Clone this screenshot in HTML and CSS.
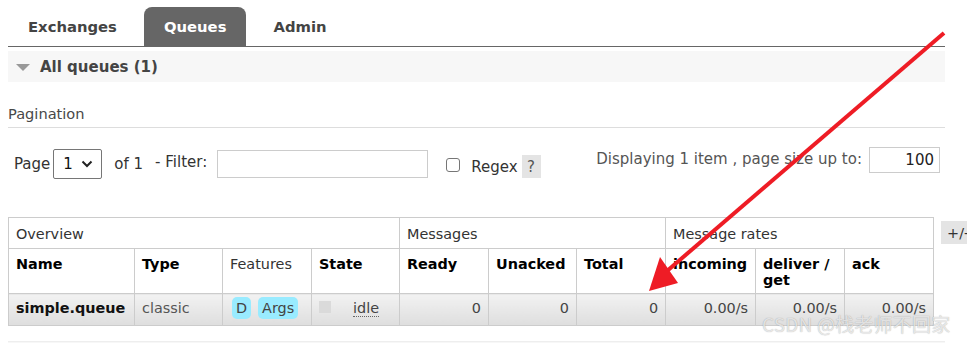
FILE: index.html
```html
<!DOCTYPE html>
<html>
<head>
<meta charset="utf-8">
<link rel="stylesheet" href="styles.css">
</head>
<body>
<div class="page">
  <div class="tabs">
    <div class="tab">Exchanges</div>
    <div class="tab active">Queues</div>
    <div class="tab">Admin</div>
  </div>
  <div class="section-head">
    <span class="tri"></span>
    <span class="section-title">All queues (1)</span>
  </div>
  <div class="pag-title">Pagination</div>
  <div class="controls">
    <div class="left-ctrls">
      <span class="lbl">Page</span>
      <span class="select"><span>1</span>
        <svg width="12" height="8" viewBox="0 0 12 8"><path d="M1.5 1.5 L6 6 L10.5 1.5" fill="none" stroke="#222" stroke-width="2"/></svg>
      </span>
      <span class="lbl of">of 1</span>
      <span class="lbl filt">- Filter:</span>
      <span class="input filter"></span>
      <span class="checkbox"></span>
      <span class="lbl regex">Regex</span>
      <span class="help">?</span>
    </div>
    <div class="right-ctrls">
      <span class="lbl disp">Displaying 1 item , page size up to:</span>
      <span class="input size">100</span>
    </div>
  </div>
  <div class="table-wrap">
    <table class="list">
      <colgroup>
        <col style="width:126px"><col style="width:88px"><col style="width:89px"><col style="width:88px">
        <col style="width:89px"><col style="width:88px"><col style="width:89px">
        <col style="width:90px"><col style="width:89px"><col style="width:89px">
      </colgroup>
      <tr class="group">
        <th colspan="4">Overview</th>
        <th colspan="3">Messages</th>
        <th colspan="3">Message rates</th>
      </tr>
      <tr class="heads">
        <th class="b">Name</th>
        <th class="b">Type</th>
        <th>Features</th>
        <th class="b">State</th>
        <th class="b">Ready</th>
        <th class="b">Unacked</th>
        <th class="b">Total</th>
        <th class="b">incoming</th>
        <th class="b">deliver / get</th>
        <th class="b">ack</th>
      </tr>
      <tr class="data">
        <td class="name">simple.queue</td>
        <td class="type">classic</td>
        <td class="feat"><span class="badge">D</span><span class="badge">Args</span></td>
        <td class="state"><span class="sq"></span><span class="idle">idle</span></td>
        <td class="num">0</td>
        <td class="num">0</td>
        <td class="num">0</td>
        <td class="num">0.00/s</td>
        <td class="num">0.00/s</td>
        <td class="num">0.00/s</td>
      </tr>
    </table>
    <span class="plusminus">+/-</span>
  </div>
  <div class="next-section"></div>
</div>
<svg class="arrow" width="967" height="343" viewBox="0 0 967 343">
  <line x1="944" y1="33" x2="667" y2="271" stroke="#ee1c25" stroke-width="4"/>
  <polygon points="649,291 660,257 678,283" fill="#ee1c25"/>
</svg>
<div class="watermark">CSDN @栈老师不回家</div>
</body>
</html>
```
FILE: styles.css
```css
html, body {
  margin: 0;
  padding: 0;
  background: #fff;
}
body {
  font-family: "DejaVu Sans", Verdana, sans-serif;
  font-size: 14.4px;
  color: #444;
  width: 967px;
  height: 343px;
  overflow: hidden;
  position: relative;
}
.page {
  padding-left: 8px;
  width: 937px;
}
.tabs {
  display: flex;
  align-items: flex-end;
  height: 46px;
  border-bottom: 1px solid #666;
  gap: 7px;
}
.tab {
  height: 39px;
  box-sizing: border-box;
  padding: 0 20px;
  display: flex;
  align-items: center;
  font-weight: bold;
  font-size: 14.8px;
  color: #444;
  border-radius: 8px 8px 0 0;
}
.tab.active {
  background: #666;
  color: #fff;
}
.section-head {
  margin-top: 4px;
  height: 31px;
  background: #f7f7f7;
  display: flex;
  align-items: center;
  padding-left: 8px;
}
.tri {
  width: 0;
  height: 0;
  border-left: 7px solid transparent;
  border-right: 7px solid transparent;
  border-top: 7px solid #999;
  margin-right: 10px;
  margin-top: 1px;
}
.section-title {
  font-weight: bold;
  font-size: 15px;
  color: #444;
}
.pag-title {
  margin-top: 23px;
  font-size: 14.6px;
  color: #484848;
  padding-bottom: 5px;
  border-bottom: 1px solid #ddd;
}
.controls {
  display: flex;
  justify-content: space-between;
  align-items: flex-start;
  margin-top: 19px;
  height: 70px;
  font-size: 15px;
}
.left-ctrls {
  display: flex;
  align-items: center;
  padding-left: 6px;
  height: 31px;
  margin-top: 1px;
}
.lbl {
  color: #333;
}
.select {
  box-sizing: border-box;
  width: 49px;
  height: 30px;
  border: 1px solid #767676;
  border-radius: 2px;
  margin-left: 3px;
  display: flex;
  align-items: center;
  justify-content: space-between;
  padding: 0 8px 0 9px;
  color: #111;
}
.of { margin-left: 12px; }
.filt { margin-left: 12px; margin-top: -4px; }
.input {
  box-sizing: border-box;
  border: 1px solid #ccc;
  background: #fff;
}
.filter {
  width: 211px;
  height: 28px;
  margin-left: 10px;
}
.checkbox {
  box-sizing: border-box;
  width: 14px;
  height: 14px;
  border: 1px solid #767676;
  border-radius: 3px;
  margin-left: 18px;
  margin-top: 2px;
}
.regex { margin-left: 11px; margin-top: 6px; }
.help {
  margin-left: 4px;
  margin-top: 6px;
  background: #e4e4e4;
  width: 19px;
  height: 23px;
  display: flex;
  align-items: center;
  justify-content: center;
  color: #555;
}
.right-ctrls {
  display: flex;
  align-items: center;
  margin-right: 5px;
  margin-top: 0px;
}
.disp { color: #555; margin-right: 7px; margin-top: -2px; }
.size {
  width: 71px;
  height: 26px;
  text-align: right;
  padding-right: 5px;
  line-height: 24px;
  color: #222;
}
.table-wrap {
  display: flex;
  align-items: flex-start;
}
.list {
  border-collapse: collapse;
  table-layout: fixed;
  width: 925px;
}
.list th, .list td {
  border: 1px solid #ccc;
  text-align: left;
  padding: 0 7px;
  font-size: 14.4px;
  line-height: 16px;
  vertical-align: top;
  overflow: hidden;
}
.group th {
  height: 29px;
  font-weight: normal;
  color: #333;
  vertical-align: middle;
  padding-top: 1px;
}
.heads th {
  height: 45px;
  font-weight: normal;
  color: #333;
  padding-top: 7px;
  box-sizing: border-box;
}
.heads th.b {
  font-weight: bold;
  color: #000;
}
.data td {
  height: 32px;
  box-sizing: border-box;
  padding-top: 6px;
  background: linear-gradient(#f2f2f2, #dedede);
  color: #444;
  white-space: nowrap;
}
.data .name {
  font-weight: bold;
  color: #111;
}
.data .type { color: #555; }
.data .num { text-align: right; }
.data .feat { padding-top: 3px; padding-left: 9px; }
.badge {
  display: inline-block;
  background: #99ebff;
  border-radius: 5px;
  padding: 3px 4px 2px;
  margin-right: 7px;
  color: #444;
  line-height: 17px;
}
.data .state { padding-left: 7px; }
.sq {
  display: inline-block;
  width: 12px;
  height: 12px;
  background: #dadada;
  vertical-align: top;
  margin-top: 1px;
  margin-right: 22px;
}
.idle {
  border-bottom: 1px dotted #666;
  color: #444;
}
.plusminus {
  margin-left: 7px;
  margin-top: 4px;
  background: #e4e4e4;
  height: 23px;
  padding: 0 6px;
  display: flex;
  align-items: center;
  color: #333;
  white-space: nowrap;
}
.next-section {
  margin-top: 15px;
  height: 20px;
  background: #f7f7f7;
  border-top: 1px solid #eee;
}
.arrow {
  position: absolute;
  left: 0;
  top: 0;
  pointer-events: none;
}
.watermark {
  position: absolute;
  left: 762px;
  top: 310px;
  font-family: "Noto Sans CJK SC", sans-serif;
  font-size: 19px;
  color: rgba(245, 245, 245, 0.8);
  text-shadow: 0 0 1px rgba(0,0,0,0.35);
  white-space: nowrap;
  letter-spacing: 0.2px;
}
```
